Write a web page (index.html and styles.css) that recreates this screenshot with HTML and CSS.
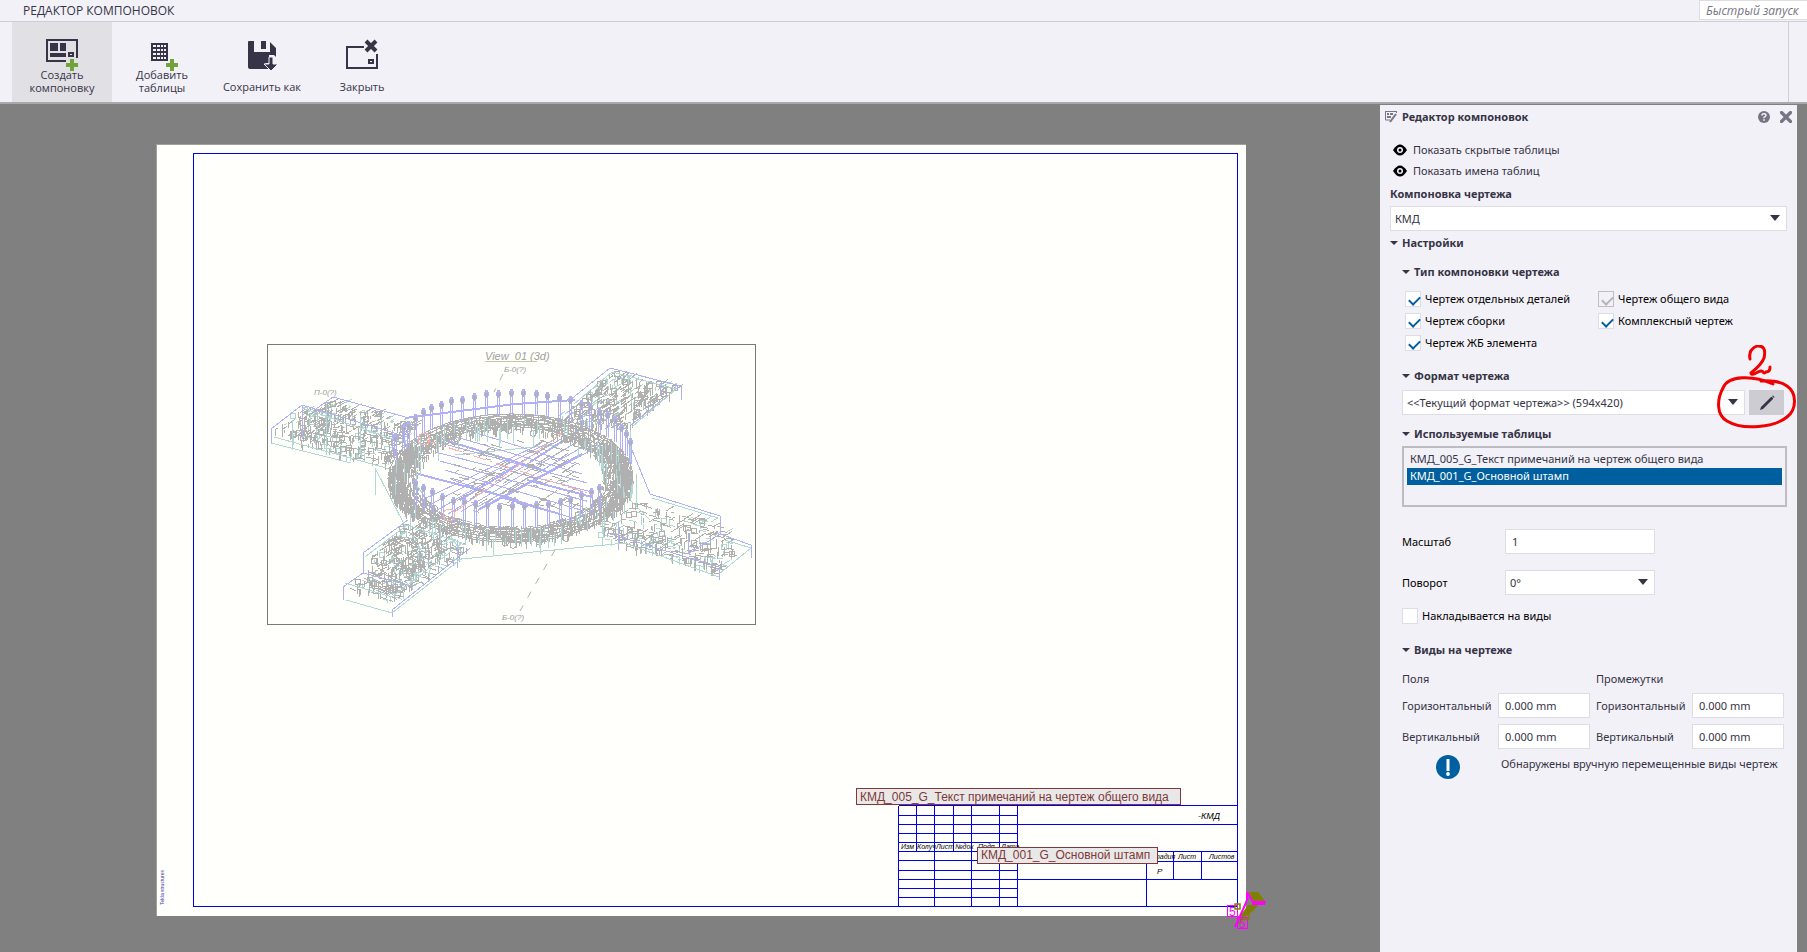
FILE: index.html
```html
<!DOCTYPE html>
<html lang="ru">
<head>
<meta charset="utf-8">
<title>Редактор компоновок</title>
<link rel="stylesheet" href="styles.css">
</head>
<body>
<div class="app">
  <header class="titlebar">
    <h1 class="titlebar-name">РЕДАКТОР КОМПОНОВОК</h1>
    <input class="quick-launch" type="text" placeholder="Быстрый запуск" aria-label="Быстрый запуск">
  </header>
  <nav class="ribbon">
    <div class="ribbon-tools">
      <button class="tool tool-active" type="button">
        <svg class="tool-icon" viewBox="0 0 32 30">
          <path d="M31 20V2H1v21h19" fill="none" stroke="#363446" stroke-width="2"/>
          <path d="M4 5h8v8H4zM14 5h6v8h-6zM4 15h16v4H4z" fill="#363446"/>
          <path d="M23 15h4v3h-4z" fill="none" stroke="#363446" stroke-width="2"/>
          <path d="M24 21h4v4h4v4h-4v4h-4v-4h-4v-4h4z" fill="#70a33c"/>
        </svg>
        <span>Создать<br>компоновку</span>
      </button>
      <button class="tool" type="button">
        <svg class="tool-icon" viewBox="0 0 32 30">
          <path d="M5 5h17v18H5z" fill="#363446"/>
          <path d="M7 7h3v2H7zm4 0h3v2h-3zm4 0h2v2h-2zm3 0h2v2h-2zM7 11h3v2H7zm4 0h3v2h-3zm4 0h2v2h-2zm3 0h2v2h-2zM7 15h3v2H7zm4 0h3v2h-3zm4 0h2v2h-2zm3 0h2v2h-2zM7 19h3v2H7zm4 0h3v2h-3zm4 0h2v2h-2zm3 0h2v2h-2z" fill="#f2f1f7"/>
          <path d="M24 21h4v4h4v4h-4v4h-4v-4h-4v-4h4z" fill="#70a33c"/>
        </svg>
        <span>Добавить<br>таблицы</span>
      </button>
      <button class="tool" type="button">
        <svg class="tool-icon" viewBox="0 0 32 30">
          <path d="M2 4q0-1 1-1h5v11h16V4l6 6v9l-2-2h-5v8h-4l6 6H4q-2 0-2-2z" fill="#363446"/>
          <path d="M15 3h5v8h-5z" fill="#363446"/>
          <path d="M23 19h4v7h5l-7 7-7-7h5z" fill="#363446" stroke="#f2f1f7"/>
        </svg>
        <span>Сохранить как</span>
      </button>
      <button class="tool" type="button">
        <svg class="tool-icon" viewBox="0 0 32 30">
          <path d="M18 9H1v21h30V16" fill="none" stroke="#363446" stroke-width="2"/>
          <path d="M23 22h4v3h-4z" fill="none" stroke="#363446" stroke-width="2"/>
          <path d="M20 3l10 10M30 3L20 13" stroke="#363446" stroke-width="4"/>
        </svg>
        <span>Закрыть</span>
      </button>
    </div>
    <div class="ribbon-end"></div>
  </nav>

  <main class="workspace">
    <svg class="canvas" viewBox="0 104 1380 848" preserveAspectRatio="xMinYMin meet" role="img" aria-label="Чертеж">
      <rect x="156" y="144" width="1090" height="772" fill="#a0a0a0"/>
      <rect x="157" y="145" width="1089" height="771" fill="#fffffb"/>
      <rect class="blue-line" x="193.5" y="153.5" width="1044" height="753"/>
      <text class="side-note" transform="translate(164 905) rotate(-90)">Tekla structures</text>

      <g id="model"></g>
      <rect x="267.500" y="344.500" width="488" height="280" fill="none" stroke="#7c7878" shape-rendering="crispEdges"/>
      <text class="gost view-name" x="485" y="360">View_01 (3d)</text>
      <path d="M485 361.500h52" stroke="#c8c8a0"/>
      <text class="gost view-mark" x="504" y="372">Б-0(?)</text>
      <text class="gost view-mark" x="314" y="395">П-0(?)</text>
      <text class="gost view-mark" x="502" y="620">Б-0(?)</text>
      <path d="M503 374l-9 18M555 550l-35 61" stroke="#b0b0b0" stroke-dasharray="7 9" fill="none"/>

      <path class="blue-line" d="M898.500 805.500H1237.500M898.500 805.500V906.500M916.500 805.500V851.500M934.500 805.500V906.500M953.500 805.500V851.500M971.500 805.500V906.500M999.500 805.500V906.500M1017.500 805.500V906.500M898.500 815.500H1017.500M898.500 824.500H1237.500M898.500 833.500H1017.500M898.500 842.500H1017.500M898.500 851.500H1237.500M898.500 860.500H1017.500M898.500 870.500H1017.500M898.500 879.500H1237.500M898.500 888.500H1017.500M898.500 897.500H1017.500M1146.500 851.500V906.500M1173.500 851.500V879.500M1201.500 851.500V879.500M1146.500 861.500H1237.500"/>
      <g class="gost stamp">
        <text x="901" y="849">Изм</text><text x="917" y="849">Колуч</text><text x="936" y="849">Лист</text><text x="955" y="849">№док</text><text x="978" y="849">Подп</text><text x="1001" y="849">Дата</text>
        <text x="1149" y="859">Стадия</text><text x="1178" y="859">Лист</text><text x="1209" y="859">Листов</text>
        <text class="stamp-mid" x="1157" y="874">Р</text>
        <text class="stamp-big" x="1198" y="819">-КМД</text>
      </g>
      <rect class="tag-box" x="856.500" y="788.500" width="324" height="16"/>
      <text class="tag" x="860" y="801">КМД_005_G_Текст примечаний на чертеж общего вида</text>
      <rect class="tag-box" x="977.500" y="847.500" width="180" height="16"/>
      <text class="tag" x="981" y="859">КМД_001_G_Основной штамп</text>

      <g class="axis">
        <path d="M1249 892h9l7 9h-12zM1248 905h10l-5 6-6 4-6 8-6 3 5-10z" fill="#808000"/>
        <path d="M1235 927l10-22 3-8M1247 892l6 10h13M1252 904h13M1247 892v8" fill="none" stroke="#f0f" stroke-width="2"/>
        <rect x="1227.500" y="905.500" width="10" height="11" fill="none" stroke="#f0f"/>
        <rect x="1237.500" y="917.500" width="10" height="11" fill="none" stroke="#f0f"/>
        <text x="1229" y="916">5</text><text x="1239" y="928">5</text>
        <path d="M1235 904h5v5h-5zM1244 914h5v5h-5z" fill="none" stroke="#808000" stroke-width="1.500"/>
      </g>
    </svg>
  </main>

  <aside class="panel">
    <header class="panel-head">
      <svg class="panel-logo" viewBox="0 0 12 12"><path d="M0 .5h12M.5 0v9H5M11.500 0v2" fill="none" stroke="#777584"/><path d="M2 2h2v2H2zM5 2h3v2H5zM2 5h4v2H2z" fill="#777584"/><path d="M11 3l-6 8" stroke="#777584" stroke-width="2"/></svg>
      <h2 class="panel-title">Редактор компоновок</h2>
      <button class="icon-button" type="button" aria-label="Справка">
        <svg viewBox="0 0 12 12"><circle cx="6" cy="6" r="6" fill="#777584"/><path d="M4 4.500Q4 2.800 6 2.800T8 4.500Q8 5.400 6 6.300V7.200" fill="none" stroke="#f2f1f7" stroke-width="1.400"/><path d="M5.200 8.300h1.600v1.500H5.200z" fill="#f2f1f7"/></svg>
      </button>
      <button class="icon-button" type="button" aria-label="Закрыть">
        <svg viewBox="0 0 12 12"><path d="M1.500 1.500l9 9M10.500 1.500l-9 9" stroke="#777584" stroke-width="3.200" stroke-linecap="round"/></svg>
      </button>
    </header>

    <div class="panel-body">
      <button class="eye-row" type="button"><svg class="eye" viewBox="0 0 14 12"><path d="M0 6q7-11 14 0q-7 11-14 0z"/><circle cx="7" cy="6" r="3" fill="#f2f1f7"/><circle cx="7" cy="6" r="1.500"/></svg>Показать скрытые таблицы</button>
      <button class="eye-row" type="button"><svg class="eye" viewBox="0 0 14 12"><path d="M0 6q7-11 14 0q-7 11-14 0z"/><circle cx="7" cy="6" r="3" fill="#f2f1f7"/><circle cx="7" cy="6" r="1.500"/></svg>Показать имена таблиц</button>

      <label class="block-label" for="layout">Компоновка чертежа</label>
      <div class="drop"><select id="layout" class="field"><option>КМД</option></select><svg class="drop-arrow" viewBox="0 0 10 6"><path d="M0 0h10L5 6z"/></svg></div>

      <h3 class="group"><svg class="caret" viewBox="0 0 8 4"><path d="M0 0h8L4 4z"/></svg>Настройки</h3>
      <div class="settings">
        <h4 class="group group-type"><svg class="caret" viewBox="0 0 8 4"><path d="M0 0h8L4 4z"/></svg>Тип компоновки чертежа</h4>
        <div class="checks">
          <label class="check"><input type="checkbox" checked>Чертеж отдельных деталей</label>
          <label class="check"><input type="checkbox" checked disabled>Чертеж общего вида</label>
          <label class="check"><input type="checkbox" checked>Чертеж сборки</label>
          <label class="check"><input type="checkbox" checked>Комплексный чертеж</label>
          <label class="check"><input type="checkbox" checked>Чертеж ЖБ элемента</label>
        </div>

        <h4 class="group group-format"><svg class="caret" viewBox="0 0 8 4"><path d="M0 0h8L4 4z"/></svg>Формат чертежа</h4>
        <div class="format-row">
          <div class="drop drop-grow"><select class="field" aria-label="Формат чертежа"><option>&lt;&lt;Текущий формат чертежа&gt;&gt; (594x420)</option></select><svg class="drop-arrow" viewBox="0 0 10 6"><path d="M0 0h10L5 6z"/></svg></div>
          <button class="edit" type="button" aria-label="Изменить"><svg viewBox="0 0 16 16"><path d="M1 15l1-3L12 2l1 0 1 1 0 1L4 14z" fill="#363446"/><path d="M13 1l1-.5 1.500 1.500-.5 1z" fill="#363446"/></svg></button>
          <svg class="mark" viewBox="0 0 84 86"><path d="M37 14q-2-9 7-13 10-1 7 12-2 6-13 15 0 3 7-1 4-2 5 0t3 0q4 0 4-5" /><path d="M60 39C40 30 15 30 10 43C4 54 3 70 14 76C30 86 62 82 74 72C84 64 84 48 74 41C67 36 55 35 48 36"/></svg>
        </div>

        <h4 class="group group-tables"><svg class="caret" viewBox="0 0 8 4"><path d="M0 0h8L4 4z"/></svg>Используемые таблицы</h4>
        <select class="tables" size="3" aria-label="Используемые таблицы">
          <option>КМД_005_G_Текст примечаний на чертеж общего вида</option>
          <option selected>КМД_001_G_Основной штамп</option>
        </select>

        <div class="form">
          <label for="scale">Масштаб</label>
          <input id="scale" class="field field-text" type="text" value="1">
          <label for="rotation">Поворот</label>
          <div class="drop"><select id="rotation" class="field"><option>0°</option></select><svg class="drop-arrow" viewBox="0 0 10 6"><path d="M0 0h10L5 6z"/></svg></div>
        </div>
        <label class="check check-overlap"><input type="checkbox">Накладывается на виды</label>

        <h4 class="group group-views"><svg class="caret" viewBox="0 0 8 4"><path d="M0 0h8L4 4z"/></svg>Виды на чертеже</h4>
        <div class="views">
          <span class="views-head">Поля</span><span class="views-head">Промежутки</span>
          <label for="mh">Горизонтальный</label><input id="mh" class="field field-text" type="text" value="0.000 mm">
          <label class="second" for="gh">Горизонтальный</label><input id="gh" class="field field-text" type="text" value="0.000 mm">
          <label for="mv">Вертикальный</label><input id="mv" class="field field-text" type="text" value="0.000 mm">
          <label class="second" for="gv">Вертикальный</label><input id="gv" class="field field-text" type="text" value="0.000 mm">
        </div>
        <div class="notice">
          <svg class="notice-icon" viewBox="0 0 24 24"><circle cx="12" cy="12" r="12" fill="#005f9e"/><path d="M10.500 4h3v12h-3z" fill="#fff"/><circle cx="12" cy="19" r="1.900" fill="#fff"/></svg>
          <p class="notice-text">Обнаружены вручную перемещенные виды чертеж</p>
        </div>
      </div>
    </div>
  </aside>
</div>
<script src="model.js"></script>
</body>
</html>
```

FILE: styles.css
```css
* { box-sizing: border-box; }

body {
  margin: 0;
  background: #808080;
  color: #363446;
  font: 12px/16px "Open Sans", "Noto Sans", sans-serif;
}

h1, h2, h3, h4, p { margin: 0; font-size: inherit; }
button, input, select { font: inherit; color: inherit; }
button { border: 0; padding: 0; background: none; }
svg { display: block; }

.app {
  display: grid;
  grid-template: 22px 82px 1fr / 1fr 417px;
  min-height: 100vh;
  padding-right: 10px;
  overflow: hidden;
}

.titlebar {
  grid-column: 1 / -1;
  display: flex;
  justify-content: space-between;
  margin-right: -10px;
  padding-left: 23px;
  background: #f2f1f7;
  border-bottom: 1px solid #cfced4;
}
.titlebar-name { font-weight: 400; line-height: 21px; }
.quick-launch {
  width: 108px;
  height: 20px;
  padding: 0 6px;
  border: 1px solid #dedde3;
  border-right: 0;
  background: #fff;
  font-style: italic;
}
.quick-launch::placeholder { color: #777584; }

.ribbon {
  grid-column: 1 / -1;
  display: flex;
  justify-content: space-between;
  margin-right: -10px;
  background: #f2f1f7;
  border-bottom: 2px solid #a9a9ad;
}
.ribbon-tools { display: flex; padding-left: 12px; }
.ribbon-end { width: 19px; border-left: 1px solid #cfced4; }
.tool {
  display: flex;
  flex-direction: column;
  align-items: center;
  justify-content: space-between;
  width: 100px;
  padding: 16px 0 9px;
  font-size: 11px;
  line-height: 13px;
}
.tool-active { background: #e1e0e5; }
.tool-icon { width: 32px; height: 30px; overflow: visible; }

.workspace { min-width: 0; overflow: hidden; }
.canvas { width: 100%; }
.blue-line { fill: none; stroke: #0000f0; shape-rendering: crispEdges; }
.gost { font-family: "Liberation Sans", sans-serif; font-style: italic; }
.view-name { font-size: 11px; fill: #a0a0a0; }
.view-mark { font-size: 8px; fill: #999; }
.side-note { font: 5px "Liberation Sans", sans-serif; fill: #4040a0; }
.stamp { font-size: 7px; fill: #000; }
.stamp-mid { font-size: 8px; }
.stamp-big { font-size: 9px; }
.tag-box { fill: #e8e8e8; stroke: #803838; shape-rendering: crispEdges; }
.tag { font: 12px "Liberation Sans", sans-serif; fill: #803838; }
.axis { font: 12px "Liberation Sans", sans-serif; fill: #f0f; }
.ink { fill: none; shape-rendering: crispEdges; }
.ink-gray { stroke: #b0b0b0; }
.ink-teal { stroke: #b0d8d4; }
.ink-blue { stroke: #b0b0f8; }
.ink-red { stroke: #ffb0b0; }

.panel { margin-top: 1px; background: #f2f1f7; font-family: "Noto Sans", sans-serif; font-size: 11px; }
.panel-head { display: flex; align-items: center; height: 24px; padding: 0 5px; }
.panel-logo { width: 12px; height: 12px; }
.panel-title { flex: 1; padding-left: 5px; font-weight: 700; }
.icon-button { width: 12px; height: 12px; margin-left: 10px; }
.panel-body { padding: 10px 10px 0; }

.eye-row { display: flex; align-items: center; gap: 6px; height: 21px; padding-left: 3px; }
.eye { width: 14px; height: 12px; fill: #000; }
.block-label { display: block; font-weight: 700; line-height: 25px; }

.field {
  display: block;
  width: 100%;
  height: 25px;
  padding: 0 4px;
  border: 1px solid #dedde3;
  border-radius: 0;
  background: #fff;
  appearance: none;
}
.field-text { padding: 0 6px; }
.drop { position: relative; }
.drop-grow { flex: 1; }
.drop-arrow {
  position: absolute;
  right: 7px;
  top: 9px;
  width: 10px;
  height: 6px;
  fill: #363446;
  pointer-events: none;
}

.group { display: flex; align-items: center; gap: 4px; height: 24px; font-weight: 700; }
.caret { width: 8px; height: 4px; fill: #363446; }
.settings { padding-left: 12px; }
.group-type { margin: 5px 0 4px; }
.group-format { margin: 10px 0 2px; }
.group-tables { margin-top: 7px; }
.group-views { margin: 14px 0 8px; }

.checks { display: grid; grid-template-columns: 193px 1fr; grid-auto-rows: 22px; padding-left: 3px; }
.check { display: flex; align-items: center; gap: 4px; color: #000; }
.check input {
  width: 16px;
  height: 16px;
  margin: 0;
  border: 1px solid #dedde3;
  background: #fff;
  appearance: none;
}
.check input:checked::before {
  content: "";
  display: block;
  width: 9px;
  height: 5px;
  margin: 4px 0 0 3px;
  border: solid #005f9e;
  border-width: 0 0 2px 2px;
  transform: rotate(-45deg);
}
.check input:disabled { border-color: #bfbec4; background: #f2f1f7; }
.check input:disabled::before { border-color: #b4b3b9; }

.format-row { position: relative; display: flex; gap: 4px; padding-right: 3px; }
.edit { display: grid; place-items: center; width: 35px; height: 25px; background: #cdccd3; }
.edit svg { width: 16px; height: 16px; }
.mark {
  position: absolute;
  right: -10px;
  top: -45px;
  width: 84px;
  height: 86px;
  fill: none;
  stroke: #f00000;
  stroke-width: 3;
  stroke-linecap: round;
  pointer-events: none;
}

.tables {
  display: block;
  width: 100%;
  height: 61px;
  padding: 3px;
  border: 2px solid #bdbcc2;
  border-radius: 0;
  background: #f2f1f7;
  overflow: hidden;
}
.tables option { height: 17px; min-height: 17px; padding: 0 3px; line-height: 17px; }
.tables option:checked { background: #005f9e linear-gradient(#005f9e, #005f9e); color: #fff; }

.form {
  display: grid;
  grid-template-columns: 103px 150px;
  row-gap: 16px;
  align-items: center;
  margin-top: 22px;
  color: #000;
}
.form .field { color: #363446; }
.check-overlap { margin-top: 13px; height: 16px; }

.views {
  display: grid;
  grid-template-columns: 96px 92px 102px 92px;
  row-gap: 6px;
  align-items: center;
}
.views-head { grid-column: span 2; line-height: 17px; }
.views-head + .views-head, .second { padding-left: 6px; }
.notice { display: flex; gap: 41px; margin-top: 6px; padding-left: 34px; }
.notice-icon { width: 24px; height: 24px; flex: none; }
.notice-text { padding-top: 1px; white-space: nowrap; }
```

FILE: model.js
```js
const group = document.getElementById("model");
let seed = 11;
const rnd = () => (seed = (seed * 16807) % 2147483647) / 2147483647;
const between = (a, b) => a + rnd() * (b - a);

function draw(kind, d, width = 1) {
  const path = document.createElementNS("http://www.w3.org/2000/svg", "path");
  path.setAttribute("class", `ink ink-${kind}`);
  path.setAttribute("d", d);
  path.setAttribute("stroke-width", width);
  group.appendChild(path);
  return path;
}

const circle = (x, y, r) => `M${x - r} ${y}a${r} ${r} 0 1 0 ${2 * r} 0a${r} ${r} 0 1 0 ${-2 * r} 0`;

// Fills a quad a-b-c-d with short strokes that run along its long side.
function truss([a, b, c, d], count) {
  let gray = "", teal = "";
  const dx = b[0] - a[0], dy = b[1] - a[1], len = Math.hypot(dx, dy);
  for (let i = 0; i < count; i++) {
    const u = rnd(), v = rnd();
    const x = Math.round((a[0] * (1 - u) + b[0] * u) * (1 - v) + (d[0] * (1 - u) + c[0] * u) * v);
    const y = Math.round((a[1] * (1 - u) + b[1] * u) * (1 - v) + (d[1] * (1 - u) + c[1] * u) * v);
    const k = rnd(), s = between(3, 9);
    let mark;
    if (k < 0.4) mark = `M${x}.5 ${y}v${s}`;
    else if (k < 0.8) mark = `M${x} ${y}l${dx / len * s} ${dy / len * s}`;
    else if (k < 0.94) mark = `M${x} ${y}l${s} ${-s * 0.6}`;
    else mark = circle(x, y, 3);
    if (rnd() < 0.75) gray += mark; else teal += mark;
  }
  draw("teal", teal);
  draw("gray", gray);
}

// Arms
truss([[274, 430], [303, 407], [345, 417], [310, 446]], 120);
truss([[303, 410], [420, 438], [400, 462], [300, 438]], 260);
truss([[300, 436], [395, 456], [385, 468], [300, 444]], 70);
truss([[314, 412], [333, 400], [420, 424], [405, 438]], 170);
truss([[552, 422], [612, 372], [678, 388], [622, 432]], 460);
truss([[407, 522], [455, 545], [395, 598], [348, 588]], 250);
truss([[365, 556], [408, 524], [462, 540], [410, 578]], 200);
truss([[347, 588], [392, 602], [475, 544], [440, 540]], 150);
truss([[632, 500], [718, 524], [735, 546], [615, 520]], 130);
truss([[600, 520], [740, 550], [718, 572], [600, 538]], 330);

draw("blue", "M271 443v-14L302 405l105 32M313 411l20-14 76 21M570 400l40-32 71 18v14M680 386l-50 40M363 573v-20l45-33M343 600v-13l20-14 49 13M392 617v-7l78-62M650 494l70 22v18l31 11v13M719 580v-13l-112-34M720 534l-32 20V534M632 450l18 44M392 430V452M457 568V540M618 550V522M302 405v34M660 383v12");
draw("teal", "M274 437l116 32M271 443l80 20M302 408l100 34M375 468l30 58M375 470V495M574 404l38-32 64 17-44 38M365 557l42-32 55 18-70 54-47-14M346 600l46 13 70-55M452 560l173-17 94 34M652 498l66 20M725 540l26 8-32 26M630 430v70l20 20M636 474v32M292 420v30M326 405v50M360 415v40M455 430l110-8M455 455l100-10M462 553l-60-90");

// Girders inside the ring
let girders = "";
for (let i = -3; i <= 3; i++) {
  const o = i * 13;
  girders += `M${435 + Math.abs(o) * 0.4} ${452 + o * 0.7}L${592 - Math.abs(o) * 0.4} ${492 + o * 0.7}`;
  girders += `M${448 + o} ${514 - Math.abs(o) * 0.2}L${572 + o * 0.8} ${436 + Math.abs(o) * 0.2}`;
}
draw("blue", girders);
draw("blue", "M438 438l108 33M418 474l100 26M478 510l104-56M530 462l50-32M460 500l60-36M527 480l65 17M500 497l60 17M405 418l110-14 60-4", 2);

// Ring
const cx = 511, cy = 478;
let ringGray = "", ringTeal = "";
for (let i = 0; i < 2300; i++) {
  const t = rnd() * Math.PI * 2, k = between(0.76, 1.01);
  const x = cx + 122 * k * Math.cos(t), y = cy + 64 * k * Math.sin(t);
  const s = between(2, 8);
  ringGray += rnd() < 0.5 ? `M${x} ${y}v${s}` : `M${x} ${y}l${-s * Math.sin(t)} ${s * 0.5 * Math.cos(t)}`;
  if (i % 26 === 0) ringGray += circle(x, y + 3, 3);
  if (i % 22 === 0) ringTeal += `M${x} ${y}v${s * 2.5}`;
}
for (let i = 0; i < 800; i++) {
  const t = (i % 2 ? 0 : Math.PI) + between(-0.6, 0.6), k = between(0.86, 1);
  ringGray += `M${cx + 122 * k * Math.cos(t)} ${cy + 64 * k * Math.sin(t)}v${between(4, 10)}`;
}
for (const k of [0.8, 0.84, 0.88, 0.93, 0.97, 1]) {
  ringGray += `M${cx - 122 * k} ${cy}a${122 * k} ${64 * k} 0 1 0 ${244 * k} 0a${122 * k} ${64 * k} 0 1 0 ${-244 * k} 0`;
}
for (let i = 0; i < 120; i++) {
  const x = between(450, 575), y = between(440, 512), s = between(4, 12);
  ringGray += i % 2 ? `M${x} ${y}l${s} ${s * 0.28}` : `M${x} ${y}l${s} ${-s * 0.65}`;
}
draw("gray", ringGray);
draw("teal", ringTeal);

// Anchor pins
const back = [[403, 428], [408, 425], [415, 418], [423, 412], [431, 408], [441, 405], [451, 401], [462, 400], [474, 397], [486, 394], [498, 394], [511, 393], [523, 393], [536, 394], [547, 396], [559, 398], [570, 400], [581, 404], [590, 407], [599, 412], [607, 415], [615, 420], [621, 428], [626, 434], [630, 442], [395, 438]];
const front = [[415, 483], [423, 488], [432, 492], [442, 497], [453, 501], [464, 502], [475, 504], [487, 505], [499, 507], [512, 506], [524, 506], [536, 505], [548, 504], [560, 502], [570, 500], [581, 495], [591, 492], [599, 488]];
let stems = "", heads = "", tips = "", cores = "";
for (const [x, y] of [...back, ...front]) {
  stems += `M${x - 0.5} ${y}v22M${x + 1.5} ${y}v22`;
  heads += `M${x - 2} ${y}h5`;
  tips += `M${x - 1} ${y}h3`;
  cores += `M${x - 1} ${y + 1}h3`;
}
draw("blue", stems);
draw("blue", heads, 4);
draw("blue", tips, 8);
draw("gray", cores, 4);

draw("red", "M425 440l168 55M455 512l107-79").setAttribute("stroke-dasharray", "14 4 3 4");
draw("red", circle(424, 439, 6) + circle(449, 515, 6));
```
